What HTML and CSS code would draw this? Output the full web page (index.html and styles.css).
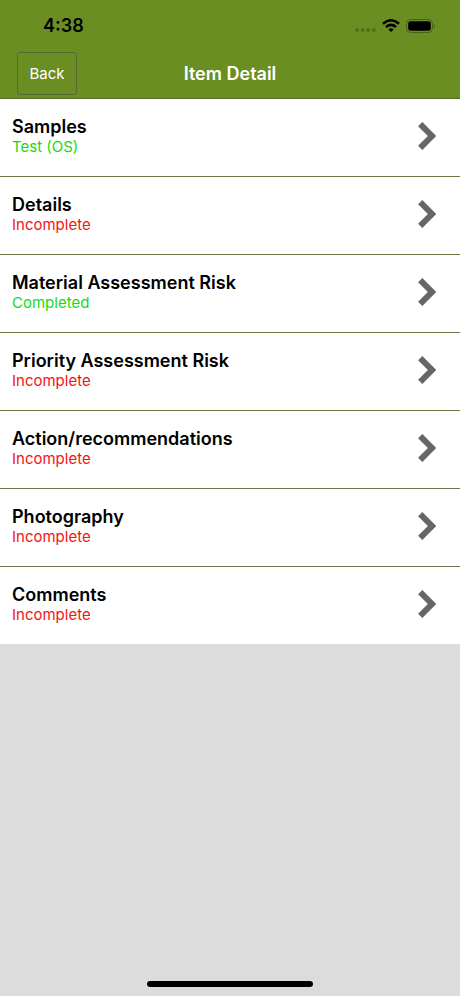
FILE: index.html
```html
<!DOCTYPE html>
<html lang="en">
<head>
<meta charset="utf-8">
<meta name="viewport" content="width=device-width, initial-scale=1">
<title>Item Detail</title>
<link rel="stylesheet" href="styles.css">
</head>
<body>
<header class="header">
  <div class="status">
    <span class="time">4:38</span>
    <svg class="status-icons" width="80" height="14" viewBox="0 0 80 14" aria-hidden="true">
      <g fill="#517016"><circle cx="2" cy="11" r="1.9"/><circle cx="7.6" cy="11" r="1.9"/><circle cx="13.2" cy="11" r="1.9"/><circle cx="18.8" cy="11" r="1.9"/></g>
      <path d="M28 4.7Q36 -2.2 44 4.7M31 8Q36 3.8 41 8" fill="none" stroke="#000" stroke-width="2.5"/>
      <path d="M33.4 10.4Q36 8.2 38.6 10.4L36 13Z"/>
      <rect x="51.5" y=".5" width="26" height="13" rx="4" fill="none" stroke="#48621a"/>
      <rect x="53.2" y="2.2" width="22.6" height="9.6" rx="2.4"/>
      <path d="M78.7 4.8Q80 5.3 80 7T78.7 9.2Z" fill="#48621a"/>
    </svg>
  </div>
  <nav class="bar">
    <button class="back" type="button">Back</button>
    <h1 class="title">Item Detail</h1>
  </nav>
</header>
<main>
  <ul class="list">
    <li><a class="row" href="#samples"><span class="text"><span class="name">Samples</span><span class="state done">Test (OS)</span></span><svg class="chevron" viewBox="0 0 20 28" aria-hidden="true"><path d="M2.2 2.2L14 14L2.2 25.8"/></svg></a></li>
    <li><a class="row" href="#details"><span class="text"><span class="name">Details</span><span class="state">Incomplete</span></span><svg class="chevron" viewBox="0 0 20 28" aria-hidden="true"><path d="M2.2 2.2L14 14L2.2 25.8"/></svg></a></li>
    <li><a class="row" href="#material"><span class="text"><span class="name">Material Assessment Risk</span><span class="state done">Completed</span></span><svg class="chevron" viewBox="0 0 20 28" aria-hidden="true"><path d="M2.2 2.2L14 14L2.2 25.8"/></svg></a></li>
    <li><a class="row" href="#priority"><span class="text"><span class="name">Priority Assessment Risk</span><span class="state">Incomplete</span></span><svg class="chevron" viewBox="0 0 20 28" aria-hidden="true"><path d="M2.2 2.2L14 14L2.2 25.8"/></svg></a></li>
    <li><a class="row" href="#actions"><span class="text"><span class="name">Action/recommendations</span><span class="state">Incomplete</span></span><svg class="chevron" viewBox="0 0 20 28" aria-hidden="true"><path d="M2.2 2.2L14 14L2.2 25.8"/></svg></a></li>
    <li><a class="row" href="#photography"><span class="text"><span class="name">Photography</span><span class="state">Incomplete</span></span><svg class="chevron" viewBox="0 0 20 28" aria-hidden="true"><path d="M2.2 2.2L14 14L2.2 25.8"/></svg></a></li>
    <li><a class="row" href="#comments"><span class="text"><span class="name">Comments</span><span class="state">Incomplete</span></span><svg class="chevron" viewBox="0 0 20 28" aria-hidden="true"><path d="M2.2 2.2L14 14L2.2 25.8"/></svg></a></li>
  </ul>
</main>
<footer class="home"><div class="indicator"></div></footer>
</body>
</html>
```
FILE: styles.css
```css
* { box-sizing: border-box; }
body {
  margin: 0;
  min-height: 100vh;
  display: flex;
  flex-direction: column;
  background: #dcdcdc;
  font-family: Inter, "Liberation Sans", sans-serif;
}
.header {
  background: #6b8e23;
  border-bottom: 1px solid #556b2f;
}
.status {
  display: flex;
  align-items: center;
  justify-content: space-between;
  padding: 14px 25px 0 43px;
}
.time {
  font-size: 18px;
  line-height: 24px;
  font-weight: 600;
}
.bar {
  display: grid;
  grid-template-columns: 1fr auto 1fr;
  align-items: center;
  padding: 14px 17px 3px;
}
.back {
  justify-self: start;
  width: 60px;
  height: 43px;
  padding: 0;
  border: 1px solid #556b2f;
  border-radius: 3px;
  background: transparent;
  color: #fff;
  font: 400 15px/20px Inter, "Liberation Sans", sans-serif;
}
.title {
  margin: 0;
  color: #fff;
  font-size: 18px;
  line-height: 24px;
  font-weight: 600;
}
.list {
  margin: 0;
  padding: 0;
  list-style: none;
  background: #fff;
}
.list li + li { border-top: 1px solid #6b7a45; }
.row {
  display: flex;
  align-items: center;
  justify-content: space-between;
  padding: 18px 22px 19px 12px;
  color: #000;
  text-decoration: none;
}
.text {
  display: flex;
  flex-direction: column;
}
.name {
  font-size: 18px;
  line-height: 20px;
  font-weight: 600;
}
.state {
  font-size: 15px;
  line-height: 20px;
  color: #f01414;
}
.done { color: #14dc14; }
.chevron {
  width: 20px;
  height: 28px;
  margin-bottom: 2px;
  fill: none;
  stroke: #666;
  stroke-width: 6;
}
.home {
  margin-top: auto;
  padding-bottom: 9px;
}
.indicator {
  width: 36%;
  height: 6px;
  margin: 0 auto;
  border-radius: 3px;
  background: #000;
}
```
